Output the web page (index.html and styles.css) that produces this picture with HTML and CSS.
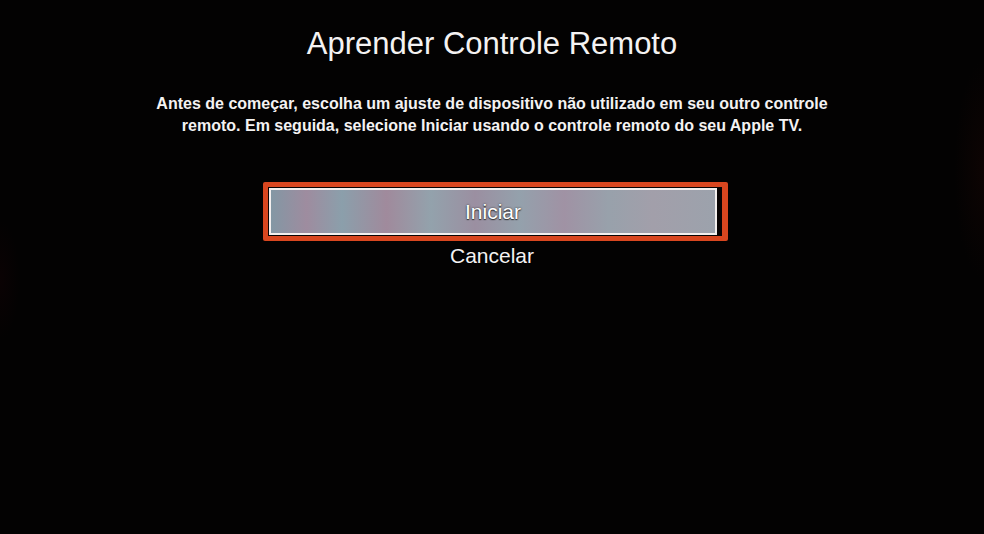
FILE: index.html
```
<html>

<head>
	<title>Aprender Controle Remoto</title>
	<link rel="stylesheet" href="styles.css">
</head>
<body>
	<div class="screen">
		<h1 class="title">Aprender Controle Remoto</h1>
		<p class="intro">Antes de começar, escolha um ajuste de dispositivo não utilizado em seu outro controle<br>remoto. Em seguida, selecione Iniciar usando o controle remoto do seu Apple TV.</p>
		<div class="menu">
			<div class="item focused">
				<div class="item-gap">
					<div class="item-face">Iniciar</div>
				</div>
			</div>
			<div class="item">Cancelar</div>
		</div>
	</div>
</body>

</html>
```
FILE: styles.css
```
body { margin: 0; background: #030202; font-family: "Liberation Sans", Arial, sans-serif; color: #f4f2f2; }
.screen { width: 984px; height: 534px; display: flex; flex-direction: column; align-items: center; overflow: hidden;
	background: radial-gradient(ellipse 30px 110px at 984px 170px, #0d0403, transparent),
		radial-gradient(ellipse 20px 60px at 0 280px, #0a0203, transparent), #030202; }
.title { margin: 26px 0 0; font-size: 31px; font-weight: normal; line-height: 36px; }
.intro { margin: 31px 0 0; font-size: 16px; font-weight: bold; line-height: 22px; text-align: center; }
.menu { margin-top: 45px; display: flex; flex-direction: column; align-items: center; }
.item { font-size: 21px; line-height: 26px; text-shadow: 0 0 1px #000; }
.focused { width: 465px; box-sizing: border-box; padding: 5px 6px 5px 5px; margin: 0 0 2px 7px; background: #d8461f; border-radius: 2px; }
.item-gap { background: #080404; padding: 1px 5px 1px 1px; }
.item-face { height: 43px; line-height: 43px; text-align: center; color: #fff; border: 2px solid #f3efee; text-shadow: 0 0 2px #333, 0 1px 1px #333;
	background: linear-gradient(90deg, #8397a4 0%, #9e8c9f 8%, #8b9fab 16%, #a08a9c 26%, #93a2ac 36%, #9b8fa1 46%, #94a1ac 56%, #a092a4 66%, #98a1ab 76%, #a29faa 86%, #9ca2ac 100%); }
```
